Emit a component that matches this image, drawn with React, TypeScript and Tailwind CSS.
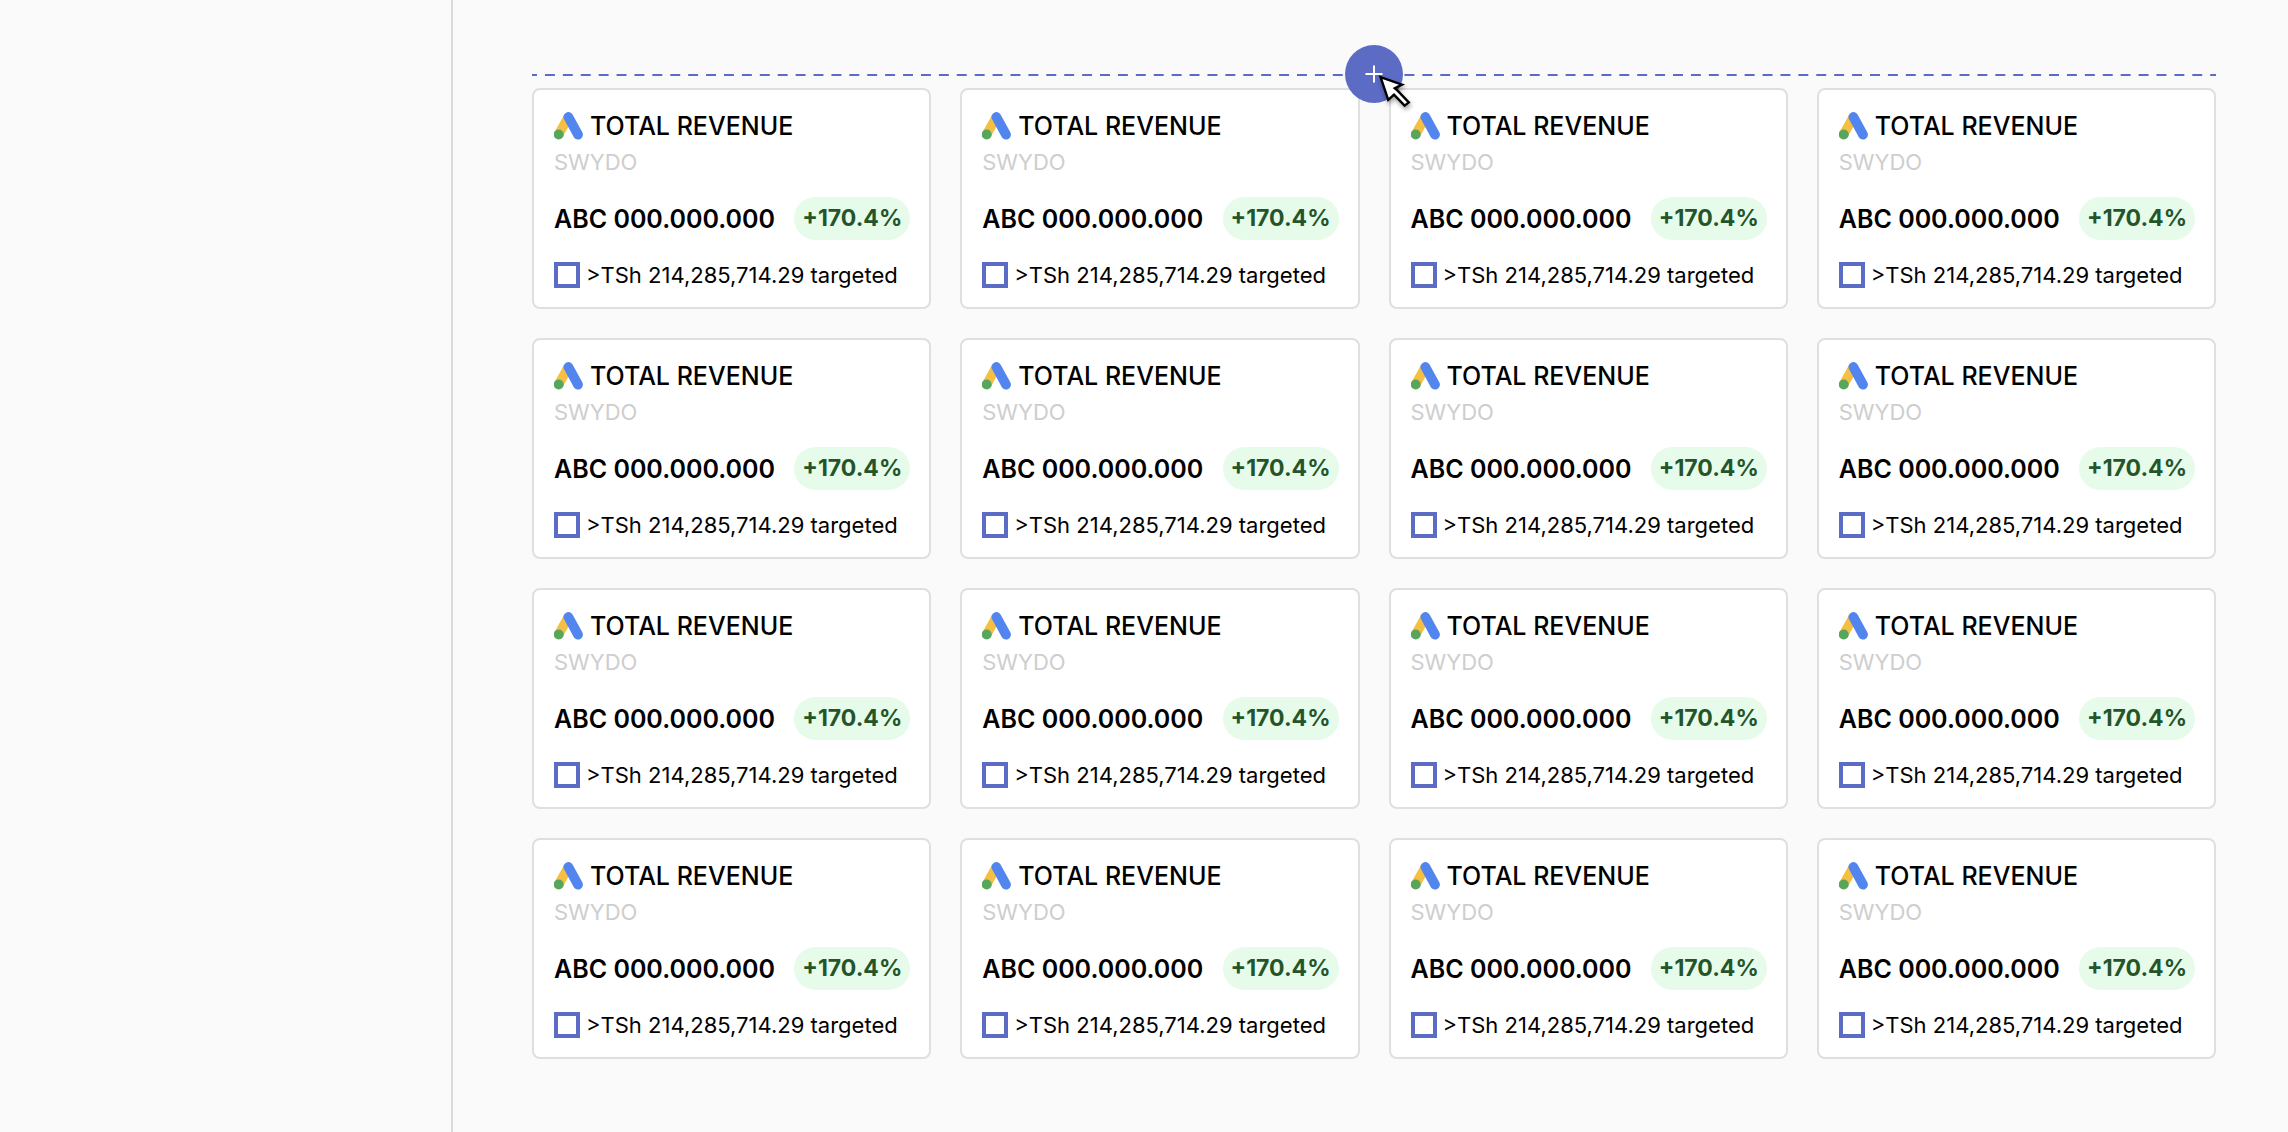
const cards = Array.from({ length: 16 }, (_, i) => ({
    id: `target-${i}`,
    title: 'TOTAL REVENUE',
    client: 'SWYDO',
    value: 'ABC 000.000.000',
    change: '+170.4%',
    target: '>TSh 214,285,714.29 targeted',
}))

type Card = (typeof cards)[number]

function AdsLogo() {
    return (
        <svg viewBox="0 0 30 28" className="w-[30px] h-7 shrink-0" aria-hidden="true">
            <path d="M14.4 5 4.6 22.5" stroke="#f4bf42" strokeWidth="9.6" />
            <path d="M14.4 5 24 22.6" stroke="#5285ee" strokeWidth="9.8" strokeLinecap="round" />
            <circle cx="4.7" cy="22.5" r="5" fill="#58a55c" />
        </svg>
    )
}

function CursorIcon() {
    return (
        <svg
            viewBox="0 0 36 38"
            className="absolute left-[32px] top-[29px] w-9 h-[38px] drop-shadow-[1px_3px_2px_rgba(0,0,0,0.35)]"
            aria-hidden="true"
        >
            <path
                d="M3.6 3.2 11.2 25.8 17 20.6 27.6 31.6 31.8 28.4 20.6 16.6 17.8 14.2 25 10.6Z"
                fill="#fff"
                stroke="#000"
                strokeWidth="2.4"
            />
        </svg>
    )
}

function RevenueCard({ card }: { card: Card }) {
    return (
        <article className="flex flex-col rounded-lg border-2 border-[#dfdfdf] bg-white pt-5 pr-[19px] pb-4 pl-5">
            <div className="flex items-center gap-1.5">
                <AdsLogo />
                <h2 className="text-[25px] leading-8 font-medium whitespace-nowrap">{card.title}</h2>
            </div>
            <p className="mt-1 text-[22px] leading-8 text-[#cecece]">{card.client}</p>
            <div className="mt-[19px] flex items-center justify-between">
                <span className="text-[25px] leading-8 font-semibold whitespace-nowrap">{card.value}</span>
                <span className="rounded-full bg-[#e6fbea] px-2 text-[23px] leading-[43px] font-bold text-[#24552a]">
                    {card.change}
                </span>
            </div>
            <div className="mt-[19px] flex items-center gap-1.5">
                <input
                    id={card.id}
                    type="checkbox"
                    className="size-[26px] shrink-0 appearance-none border-4 border-[#5c6bc4] bg-white checked:bg-[#5c6bc4]"
                />
                <label htmlFor={card.id} className="text-[22px] leading-8 whitespace-nowrap">
                    {card.target}
                </label>
            </div>
        </article>
    )
}

function InsertRow() {
    return (
        <div className="flex h-7 items-center justify-center bg-[linear-gradient(to_right,#5c6bc4_5px,transparent_5px_13px,#5c6bc4_13px)] bg-[length:18px_2px] bg-[position:0_14px] [background-repeat:round_no-repeat]">
            <div className="relative z-10">
                <button
                    type="button"
                    aria-label="Add row"
                    className="flex size-[58px] items-center justify-center rounded-full bg-[#5c6bc4]"
                >
                    <svg viewBox="0 0 18 18" className="size-[18px]" aria-hidden="true">
                        <path d="M9 0.5V17.5M0.5 9H17.5" stroke="#fff" strokeWidth="2" />
                    </svg>
                </button>
                <CursorIcon />
            </div>
        </div>
    )
}

export default function App() {
    return (
        <div className="flex min-h-screen bg-[#fafafa] font-['Inter',sans-serif] text-black">
            <aside className="w-[453px] shrink-0 border-r-2 border-[#dadada]" />
            <main className="flex-1 pt-15 pr-[72px] pb-[71px] pl-[79px]">
                <InsertRow />
                <div className="grid grid-cols-4 gap-[29px]">
                    {cards.map((card) => (
                        <RevenueCard key={card.id} card={card} />
                    ))}
                </div>
            </main>
        </div>
    )
}
